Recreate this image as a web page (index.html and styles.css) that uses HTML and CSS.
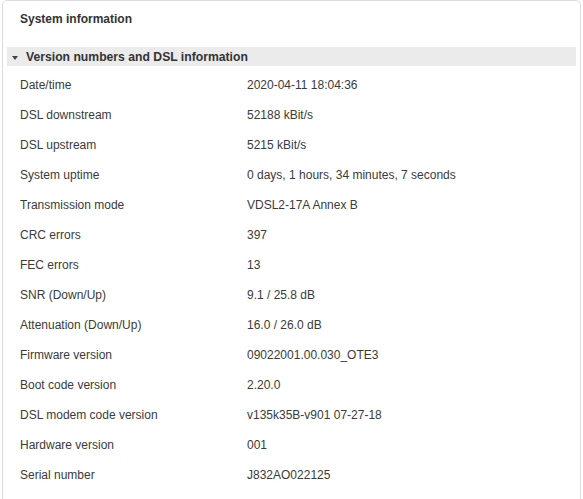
FILE: index.html
```html
<!DOCTYPE html>
<html lang="en">
<head>
  <meta charset="UTF-8" />
  <title>System information</title>
  <link rel="stylesheet" href="styles.css">
</head>
<body>
  <div class="card">
    <h2 class="card-title">System information</h2>

    <div class="section-head">
      <span class="caret"></span>
      <span>Version numbers and DSL information</span>
    </div>

    <div class="info">
      <div class="row"><span>Date/time</span><span>2020-04-11 18:04:36</span></div>
      <div class="row"><span>DSL downstream</span><span>52188 kBit/s</span></div>
      <div class="row"><span>DSL upstream</span><span>5215 kBit/s</span></div>
      <div class="row"><span>System uptime</span><span>0 days, 1 hours, 34 minutes, 7 seconds</span></div>
      <div class="row"><span>Transmission mode</span><span>VDSL2-17A Annex B</span></div>
      <div class="row"><span>CRC errors</span><span>397</span></div>
      <div class="row"><span>FEC errors</span><span>13</span></div>
      <div class="row"><span>SNR (Down/Up)</span><span>9.1 / 25.8 dB</span></div>
      <div class="row"><span>Attenuation (Down/Up)</span><span>16.0 / 26.0 dB</span></div>
      <div class="row"><span>Firmware version</span><span>09022001.00.030_OTE3</span></div>
      <div class="row"><span>Boot code version</span><span>2.20.0</span></div>
      <div class="row"><span>DSL modem code version</span><span>v135k35B-v901 07-27-18</span></div>
      <div class="row"><span>Hardware version</span><span>001</span></div>
      <div class="row"><span>Serial number</span><span>J832AO022125</span></div>
    </div>
  </div>
</body>
</html>
```

FILE: styles.css
```css
body {
  margin: 0;
  padding: 0 2px;
  background: #fff;
  font-family: "Liberation Sans", Arial, sans-serif;
  font-size: 12px;
  color: #333;
}

.card {
  width: 579px;
  height: 520px;
  border: 1px solid #dcdcdc;
  border-radius: 5px;
  box-sizing: border-box;
}

.card-title {
  margin: 0;
  padding: 0 0 0 17px;
  height: 46px;
  line-height: 36px;
  font-size: 12px;
  font-weight: bold;
  color: #333;
}

.section-head {
  margin: 0 4px;
  height: 19px;
  background: #ebebeb;
  display: flex;
  align-items: center;
  gap: 8px;
  padding-left: 5px;
  font-size: 12.2px;
  font-weight: bold;
  color: #333;
}

.caret {
  width: 0;
  height: 0;
  border-left: 3.5px solid transparent;
  border-right: 3.5px solid transparent;
  border-top: 4px solid #444;
  margin-top: 3px;
}

.info {
  padding-top: 4px;
}

.row {
  display: grid;
  grid-template-columns: 227px 1fr;
  padding-left: 17px;
  height: 30px;
  line-height: 30px;
  color: #3a3a3a;
}
```
